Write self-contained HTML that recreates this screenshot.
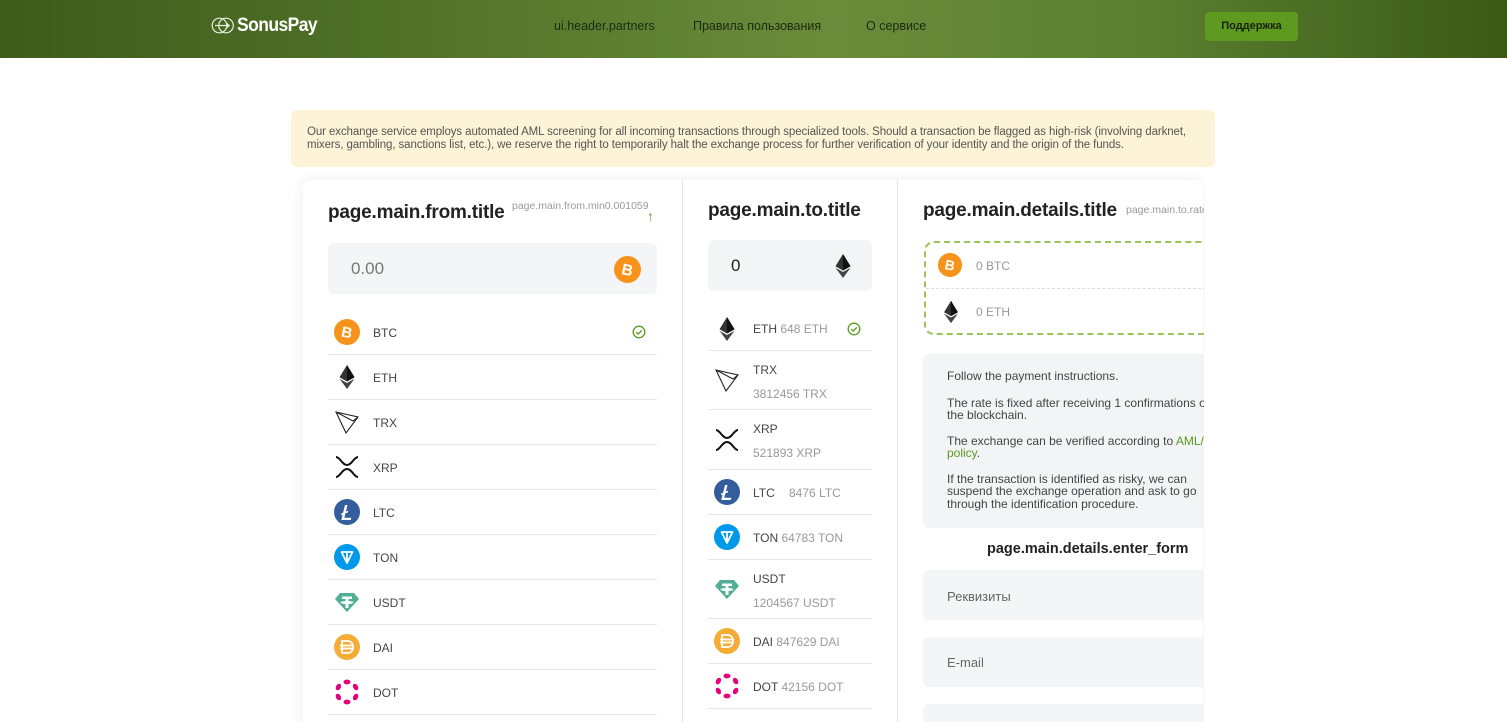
<!DOCTYPE html>
<html style="width:1507px;height:722px;overflow:hidden"><head><meta charset="utf-8"><style>
*{margin:0;padding:0;box-sizing:border-box}
body{width:1507px;height:722px;overflow:hidden;background:#fff;font-family:"Liberation Sans",Arial,sans-serif;position:relative;color:#333}
.hdr{position:absolute;left:0;top:0;width:1507px;height:58px;background:linear-gradient(90deg,#3d5c1c 0%,#4f7027 25%,#6a8c3a 55%,#5d8032 75%,#3a5a16 100%)}
.a{position:absolute}
.nav{font-size:12.5px;color:#1c2a10;top:19px}
.btn{left:1205px;top:12px;width:93px;height:29px;background:#5f9a20;border-radius:4px;font-size:11px;font-weight:bold;color:#17230c;text-align:center;line-height:29px}
.ban{left:291px;top:110px;width:924px;height:57px;background:#fdf3d6;border-radius:6px;font-size:11.5px;color:#555;padding:16px 16px 0 16px;line-height:13px;letter-spacing:-0.1px}
.card{left:303px;top:180px;width:900px;height:560px;background:#fff;box-shadow:0 0 14px rgba(0,0,0,.08);border-radius:8px}
.vl{width:1px;background:#e4e4e4;top:180px;height:542px}
.t{font-size:19px;font-weight:bold;color:#222;letter-spacing:-0.2px}
.sm{font-size:10.5px;color:#999}
.inp{background:#f4f5f7;border-radius:6px}
.row{position:absolute;border-bottom:1px solid #e6e6e6;font-size:12px;color:#444}
.row svg{position:absolute}
.g{color:#999}
.cover{left:1204px;top:170px;width:303px;height:552px;background:#fff}
</style></head><body>
<svg width="0" height="0" style="position:absolute">
<defs>
<symbol id="btc" viewBox="0 0 26 26"><circle cx="13" cy="13" r="13" fill="#f7931a"/><text x="13" y="18.5" font-size="15" font-weight="bold" fill="#fff" text-anchor="middle" font-family="Liberation Sans" transform="rotate(12 13 13)">B</text></symbol>
<symbol id="eth" viewBox="0 0 26 26"><path d="M13 1L5.5 13.3 13 17.5 20.5 13.3Z" fill="#333"/><path d="M13 1v16.5l7.5-4.2z" fill="#111"/><path d="M13 19l-7.5-4.3L13 25l7.5-10.3z" fill="#444"/></symbol>
<symbol id="trx" viewBox="0 0 26 26"><path d="M2 3l22 5-12 16z M2 3l10 21 M2 3l17 9 5-4" fill="none" stroke="#222" stroke-width="1.1"/></symbol>
<symbol id="xrp" viewBox="0 0 26 26"><path d="M2 3c4 0 6 8 11 8s7-8 11-8M2 23c4 0 6-8 11-8s7 8 11 8" fill="none" stroke="#111" stroke-width="2"/></symbol>
<symbol id="ltc" viewBox="0 0 26 26"><circle cx="13" cy="13" r="13" fill="#345d9d"/><path d="M11 6h2.5l-1.6 6.5 2.4-.9-.5 1.9-2.4.9-1.1 4.3h7l-.6 2.3H7.3l1.3-5.4-1.6.6.5-1.9 1.6-.6z" fill="#fff"/></symbol>
<symbol id="ton" viewBox="0 0 26 26"><circle cx="13" cy="13" r="13" fill="#0098ea"/><path d="M7.5 8h11L13 19z M13 8v11" fill="none" stroke="#fff" stroke-width="1.8" stroke-linejoin="round"/></symbol>
<symbol id="usdt" viewBox="0 0 26 26"><path d="M6 4h14l5 6-12 13L1 10z" fill="#50af95"/><path d="M8 7.5h10v2.5h-3.5v2c3 .2 5 .8 5 1.5s-2 1.3-5 1.5v4h-3v-4c-3-.2-5-.8-5-1.5s2-1.3 5-1.5v-2H8z" fill="#fff"/></symbol>
<symbol id="dai" viewBox="0 0 26 26"><circle cx="13" cy="13" r="13" fill="#f5ac37"/><path d="M8 7h5.5c3.5 0 5.5 2.5 5.5 6s-2 6-5.5 6H8z M6 11.5h14M6 14.5h14" fill="none" stroke="#fff" stroke-width="1.8"/></symbol>
<symbol id="dot" viewBox="0 0 26 26"><g fill="#e6007a"><ellipse cx="13" cy="3" rx="3.5" ry="2.4"/><ellipse cx="13" cy="23" rx="3.5" ry="2.4"/><ellipse cx="4.4" cy="8" rx="3.5" ry="2.4" transform="rotate(-60 4.4 8)"/><ellipse cx="21.6" cy="8" rx="3.5" ry="2.4" transform="rotate(60 21.6 8)"/><ellipse cx="4.4" cy="18" rx="3.5" ry="2.4" transform="rotate(60 4.4 18)"/><ellipse cx="21.6" cy="18" rx="3.5" ry="2.4" transform="rotate(-60 21.6 18)"/></g></symbol>
<symbol id="chk" viewBox="0 0 14 14"><circle cx="7" cy="7" r="5.8" fill="none" stroke="#5a9a1c" stroke-width="1.3"/><path d="M4.3 7.2l1.9 1.9 3.6-3.8" fill="none" stroke="#5a9a1c" stroke-width="1.3"/></symbol>
</defs></svg>

<div class="hdr"></div>
<svg class="a" style="left:211px;top:17px" width="24" height="17" viewBox="0 0 24 17"><circle cx="8.5" cy="8.5" r="7.3" fill="none" stroke="#e6eedc" stroke-width="1.2"/><circle cx="15" cy="8.5" r="7.3" fill="none" stroke="#e6eedc" stroke-width="1.2"/><path d="M4 8.5h15M15 5.5l3 3-3 3" fill="none" stroke="#e6eedc" stroke-width="1.2"/></svg>
<div class="a" style="left:237px;top:15px;font-size:19px;font-weight:bold;color:#fff;letter-spacing:-0.6px;transform:scaleX(0.92);transform-origin:left">SonusPay</div>
<div class="a nav" style="left:554px">ui.header.partners</div>
<div class="a nav" style="left:693px">Правила пользования</div>
<div class="a nav" style="left:866px">О сервисе</div>
<div class="a btn">Поддержка</div>

<div class="a ban">Our exchange service employs automated AML screening for all incoming transactions through specialized tools. Should a transaction be flagged as high-risk (involving darknet, mixers, gambling, sanctions list, etc.), we reserve the right to temporarily halt the exchange process for further verification of your identity and the origin of the funds.</div>

<div class="a card"></div>
<div class="a vl" style="left:682px"></div>
<div class="a vl" style="left:897px"></div>

<!-- col 1 -->
<div class="a t" style="left:328px;top:202px">page.main.from.title</div>
<div class="a sm" style="left:512px;top:200px">page.main.from.min0.001059</div>
<div class="a" style="left:647px;top:208px;color:#5a9a1c;font-size:14px">↑</div>
<div class="a inp" style="left:328px;top:243px;width:329px;height:51px"></div>
<div class="a" style="left:351px;top:259px;font-size:17px;color:#777">0.00</div>
<svg class="a" style="left:614px;top:256px" width="27" height="27"><use href="#btc"/></svg>

<div class="row" style="left:328px;top:310px;width:329px;height:45px"><svg style="left:6px;top:9px" width="26" height="26"><use href="#btc"/></svg><span class="a" style="left:45px;top:16px">BTC</span><svg style="left:304px;top:15px" width="14" height="14"><use href="#chk"/></svg></div>
<div class="row" style="left:328px;top:355px;width:329px;height:45px"><svg style="left:6px;top:9px" width="26" height="26"><use href="#eth"/></svg><span class="a" style="left:45px;top:16px">ETH</span></div>
<div class="row" style="left:328px;top:400px;width:329px;height:45px"><svg style="left:6px;top:9px" width="26" height="26"><use href="#trx"/></svg><span class="a" style="left:45px;top:16px">TRX</span></div>
<div class="row" style="left:328px;top:445px;width:329px;height:45px"><svg style="left:6px;top:9px" width="26" height="26"><use href="#xrp"/></svg><span class="a" style="left:45px;top:16px">XRP</span></div>
<div class="row" style="left:328px;top:490px;width:329px;height:45px"><svg style="left:6px;top:9px" width="26" height="26"><use href="#ltc"/></svg><span class="a" style="left:45px;top:16px">LTC</span></div>
<div class="row" style="left:328px;top:535px;width:329px;height:45px"><svg style="left:6px;top:9px" width="26" height="26"><use href="#ton"/></svg><span class="a" style="left:45px;top:16px">TON</span></div>
<div class="row" style="left:328px;top:580px;width:329px;height:45px"><svg style="left:6px;top:9px" width="26" height="26"><use href="#usdt"/></svg><span class="a" style="left:45px;top:16px">USDT</span></div>
<div class="row" style="left:328px;top:625px;width:329px;height:45px"><svg style="left:6px;top:9px" width="26" height="26"><use href="#dai"/></svg><span class="a" style="left:45px;top:16px">DAI</span></div>
<div class="row" style="left:328px;top:670px;width:329px;height:45px"><svg style="left:6px;top:9px" width="26" height="26"><use href="#dot"/></svg><span class="a" style="left:45px;top:16px">DOT</span></div>

<!-- col 2 -->
<div class="a t" style="left:708px;top:200px">page.main.to.title</div>
<div class="a inp" style="left:708px;top:240px;width:164px;height:51px"></div>
<div class="a" style="left:731px;top:256px;font-size:17px;color:#222">0</div>
<svg class="a" style="left:830px;top:252px" width="26" height="28"><use href="#eth"/></svg>

<div class="row" style="left:708px;top:306px;width:164px;height:45px"><svg style="left:6px;top:10px" width="26" height="26"><use href="#eth"/></svg><span class="a" style="left:45px;top:16px">ETH <span class="g">648 ETH</span></span><svg style="left:139px;top:16px" width="14" height="14"><use href="#chk"/></svg></div>
<div class="row" style="left:708px;top:351px;width:164px;height:59px"><svg style="left:6px;top:16px" width="26" height="26"><use href="#trx"/></svg><span class="a" style="left:45px;top:12px">TRX</span><span class="a g" style="left:45px;top:36px">3812456 TRX</span></div>
<div class="row" style="left:708px;top:410px;width:164px;height:60px"><svg style="left:6px;top:17px" width="26" height="26"><use href="#xrp"/></svg><span class="a" style="left:45px;top:12px">XRP</span><span class="a g" style="left:45px;top:36px">521893 XRP</span></div>
<div class="row" style="left:708px;top:470px;width:164px;height:45px"><svg style="left:6px;top:9px" width="26" height="26"><use href="#ltc"/></svg><span class="a" style="left:45px;top:16px">LTC</span><span class="a g" style="left:81px;top:16px">8476 LTC</span></div>
<div class="row" style="left:708px;top:515px;width:164px;height:45px"><svg style="left:6px;top:9px" width="26" height="26"><use href="#ton"/></svg><span class="a" style="left:45px;top:16px">TON <span class="g">64783 TON</span></span></div>
<div class="row" style="left:708px;top:560px;width:164px;height:59px"><svg style="left:6px;top:16px" width="26" height="26"><use href="#usdt"/></svg><span class="a" style="left:45px;top:12px">USDT</span><span class="a g" style="left:45px;top:36px">1204567 USDT</span></div>
<div class="row" style="left:708px;top:619px;width:164px;height:45px"><svg style="left:6px;top:9px" width="26" height="26"><use href="#dai"/></svg><span class="a" style="left:45px;top:16px">DAI <span class="g">847629 DAI</span></span></div>
<div class="row" style="left:708px;top:664px;width:164px;height:45px"><svg style="left:6px;top:9px" width="26" height="26"><use href="#dot"/></svg><span class="a" style="left:45px;top:16px">DOT <span class="g">42156 DOT</span></span></div>

<!-- col 3 -->
<div class="a t" style="left:923px;top:200px">page.main.details.title</div>
<div class="a sm" style="left:1126px;top:204px">page.main.to.rate</div>
<div class="a" style="left:924px;top:241px;width:300px;height:94px;border:2px dashed #9cc45a;border-radius:10px"></div>
<div class="a" style="left:926px;top:288px;width:290px;border-top:1px dashed #ddd"></div>
<svg class="a" style="left:938px;top:253px" width="24" height="24"><use href="#btc"/></svg>
<div class="a" style="left:976px;top:259px;font-size:12px;color:#999">0 BTC</div>
<svg class="a" style="left:939px;top:299px" width="24" height="26"><use href="#eth"/></svg>
<div class="a" style="left:976px;top:305px;font-size:12px;color:#999">0 ETH</div>

<div class="a inp" style="left:923px;top:354px;width:300px;height:174px;background:#f3f4f6"></div>
<div class="a" style="left:947px;top:370px;width:270px;font-size:12px;color:#444;line-height:12.5px;white-space:nowrap">
<div>Follow the payment instructions.</div>
<div style="margin-top:14px">The rate is fixed after receiving 1 confirmations on<br>the blockchain.</div>
<div style="margin-top:13px">The exchange can be verified according to <span style="color:#5a9a1c">AML/KYC</span><br><span style="color:#5a9a1c">policy</span>.</div>
<div style="margin-top:13px">If the transaction is identified as risky, we can<br>suspend the exchange operation and ask to go<br>through the identification procedure.</div>
</div>
<div class="a" style="left:987px;top:541px;font-size:14.5px;font-weight:bold;color:#222">page.main.details.enter_form</div>
<div class="a inp" style="left:923px;top:570px;width:300px;height:50px"></div>
<div class="a" style="left:947px;top:589px;font-size:13px;color:#666">Реквизиты</div>
<div class="a inp" style="left:923px;top:637px;width:300px;height:50px"></div>
<div class="a" style="left:947px;top:655px;font-size:13px;color:#666">E-mail</div>
<div class="a inp" style="left:923px;top:704px;width:300px;height:18px"></div>

<div class="a cover"></div>
</body></html>
